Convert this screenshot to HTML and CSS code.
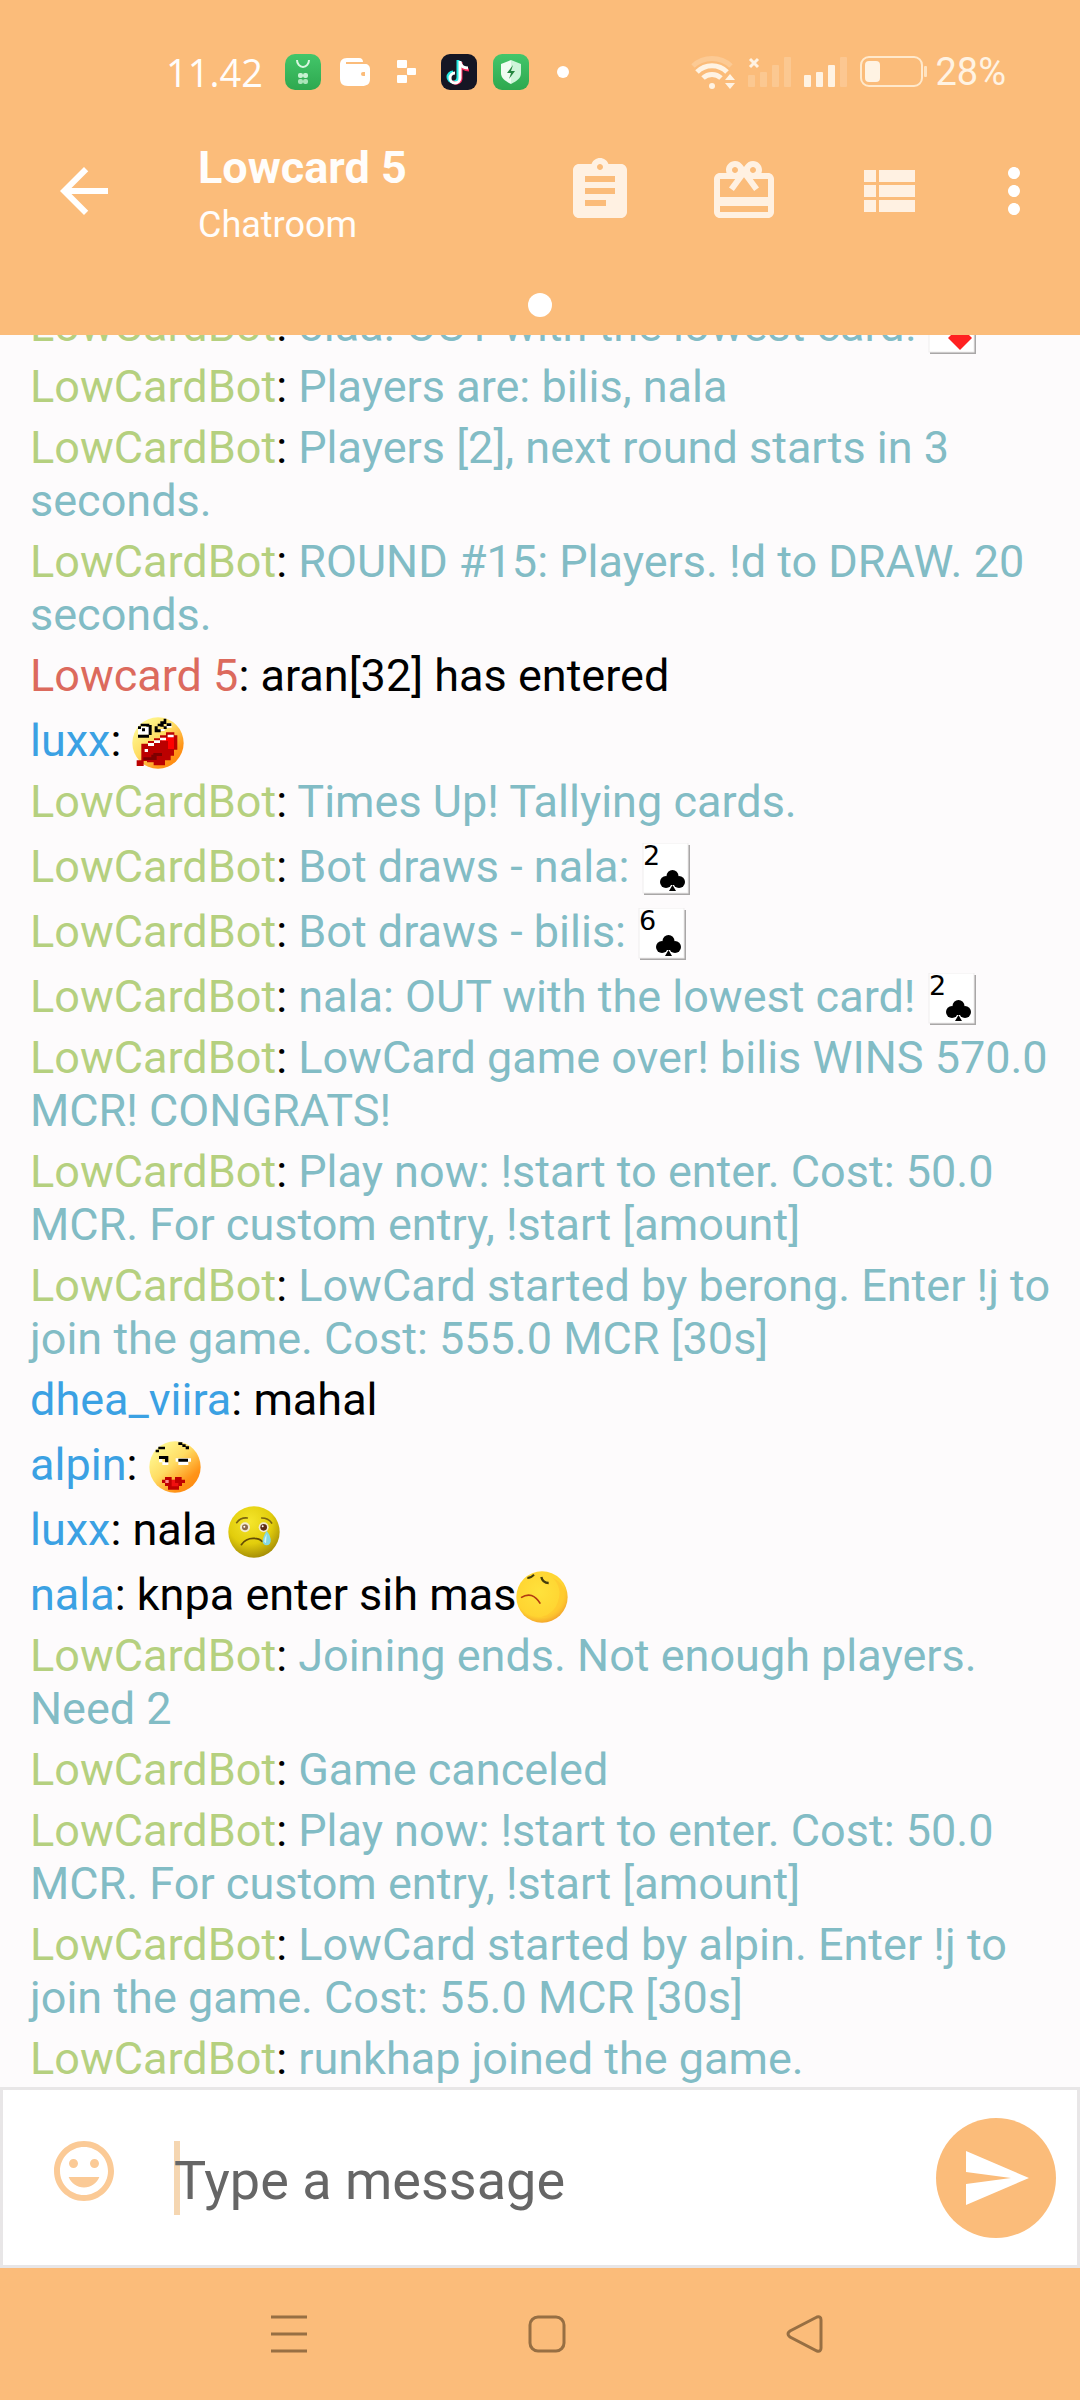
FILE: index.html
```html
<!DOCTYPE html>
<html lang="id">
<head>
<meta charset="utf-8">
<meta name="viewport" content="width=device-width, initial-scale=1">
<title>Lowcard 5</title>
<link rel="stylesheet" href="styles.css">
</head>
<body>
<svg class="defs" aria-hidden="true">
  <defs>
    <linearGradient id="face" x1="0.2" y1="0.1" x2="0.9" y2="0.9">
      <stop offset="0" stop-color="#fff78f"/><stop offset="0.4" stop-color="#ffdc63"/><stop offset="0.8" stop-color="#ff9418"/><stop offset="1" stop-color="#ff8a10"/>
    </linearGradient>
    <radialGradient id="sadface" cx="0.42" cy="0.3" r="0.72">
      <stop offset="0" stop-color="#f5e62c"/><stop offset="0.6" stop-color="#e2cd0c"/><stop offset="1" stop-color="#a48c06"/>
    </radialGradient>
    <radialGradient id="frownface" cx="0.45" cy="0.4" r="0.6">
      <stop offset="0" stop-color="#ffe23c"/><stop offset="0.8" stop-color="#ffd431"/><stop offset="1" stop-color="#f5a92c"/>
    </radialGradient>
    <linearGradient id="green" x1="0" y1="0" x2="0" y2="1">
      <stop offset="0" stop-color="#43c66a"/><stop offset="1" stop-color="#2ea84f"/>
    </linearGradient>
    <symbol id="card" viewBox="0 0 52 52">
      <rect x="3" y="2" width="46" height="50" fill="#a9a7a7"/>
      <rect x="2" y="0" width="45" height="50" fill="#fff" stroke="#efeded"/>
    </symbol>
    <symbol id="club" viewBox="0 0 25 22">
      <circle cx="12.500" cy="6" r="6"/><circle cx="6" cy="12" r="6"/><circle cx="19" cy="12" r="6"/>
      <path d="M9 7h7v8H9zM12.500 15l3.500 6H9z"/>
    </symbol>
  </defs>
</svg>

<div class="screen">
  <header class="top">
    <div class="status">
      <span class="clock">11.42</span>
      <div class="status-apps">
        <svg width="36" height="36" viewBox="0 0 36 36"><rect width="36" height="36" rx="10" fill="url(#green)"/><path d="M12 6a6 7 0 0 0 12 0" fill="none" stroke="#d9f7e1" stroke-width="2"/><g fill="#c8f2d2"><rect x="13" y="19" width="5" height="5" rx="2"/><rect x="18" y="19" width="5" height="5" rx="2"/><rect x="13" y="25" width="5" height="5" rx="2" opacity=".8"/><rect x="18" y="25" width="5" height="5" rx="2" opacity=".8"/></g></svg>
        <svg width="32" height="30" viewBox="0 0 32 30"><path fill="#fff" d="M8 1h12c3 0 4 2 4 4H7v2h19c3 0 5 2 5 5v10c0 5-3 7-8 7H9c-6 0-8-3-8-8V8c0-4 2-7 7-7z"/><path fill="#fbbc7a" d="M24 15h2v4h-2a2 2 0 0 1 0-4z"/></svg>
        <svg width="20" height="24" viewBox="0 0 20 24" fill="#fff"><rect width="10" height="8" rx="1"/><rect x="10" y="8" width="9" height="7" rx="1"/><rect y="15" width="10" height="8" rx="1"/></svg>
        <svg width="36" height="36" viewBox="0 0 36 36"><rect width="36" height="36" rx="9" fill="#151624"/><g fill="none" stroke-width="3"><path stroke="#25e8e2" d="M17 6v17a5 5 0 1 1-5-5M17 8c1 4 4 6 8 6"/><path stroke="#f8285b" d="M20 8v17a5 5 0 0 1-9 2M20 10c1 4 3 6 8 6"/><path stroke="#fff" d="M19 7v17a5 5 0 1 1-5-5M19 8c1 4 3 6 8 6"/></g></svg>
        <svg width="36" height="36" viewBox="0 0 36 36"><rect width="36" height="36" rx="9" fill="url(#green)"/><path fill="#cdf5da" d="M18 6l10 4v9c0 5-4 8-10 11z"/><path fill="#effcf2" d="M18 6L8 10v9c0 5 4 8 10 11z"/><path fill="#23853f" d="M20 11l-6 8h4l-2 6 6-8h-4z"/></svg>
        <svg width="12" height="12" viewBox="0 0 12 12"><circle cx="6" cy="6" r="6" fill="#fff"/></svg>
      </div>
      <div class="status-system">
        <svg width="45" height="36" viewBox="0 0 45 36"><g fill="none" stroke="#fff3e3" stroke-width="5"><path d="M2 12a28 28 0 0 1 38 0" opacity=".25"/><path d="M6 18a21 21 0 0 1 30 0"/><path d="M12 24a13 13 0 0 1 18 0"/></g><g fill="#fff3e3"><circle cx="21" cy="32" r="3"/><path d="M34 26l5-6 5 6zM34 29h10l-5 6z"/></g></svg>
        <svg width="44" height="32" viewBox="0 0 44 32" fill="#fff3e3"><g opacity=".22"><rect y="19" width="7" height="12" rx="1"/><rect x="12" y="16" width="7" height="15" rx="1"/><rect x="24" y="9" width="7" height="22" rx="1"/><rect x="36" y="1" width="7" height="30" rx="1"/></g><path d="M2 3l8 8M10 3l-8 8" stroke="#fff3e3" stroke-width="3"/></svg>
        <svg width="44" height="32" viewBox="0 0 44 32" fill="#fff3e3"><rect y="19" width="7" height="12" rx="1"/><rect x="12" y="16" width="7" height="15" rx="1"/><rect x="24" y="9" width="7" height="22" rx="1"/><rect x="36" y="1" width="7" height="30" rx="1" opacity=".22"/></svg>
        <svg width="68" height="32" viewBox="0 0 68 32"><rect x="1" y="1" width="61" height="29" rx="8" fill="none" stroke="#ffe9cc" stroke-width="2"/><rect x="5" y="5" width="15" height="21" rx="4" fill="#fff3e3"/><rect x="64" y="10" width="3" height="11" rx="1" fill="#ffe3c0"/></svg>
      </div>
      <span class="battery">28%</span>
    </div>

    <div class="toolbar">
      <button class="icon-button back" aria-label="Back"><svg viewBox="0 0 24 24"><path d="M20 11H7.830l5.590-5.590L12 4l-8 8 8 8 1.410-1.410L7.830 13H20v-2z"/></svg></button>
      <div class="titles">
        <h1 class="title">Lowcard 5</h1>
        <p class="subtitle">Chatroom</p>
      </div>
      <div class="actions">
        <button class="icon-button soft" aria-label="Notes"><svg viewBox="0 0 24 24"><path d="M19 3h-4.180C14.400 1.840 13.300 1 12 1c-1.300 0-2.400.84-2.820 2H5c-1.100 0-2 .9-2 2v14c0 1.100.9 2 2 2h14c1.100 0 2-.9 2-2V5c0-1.100-.9-2-2-2zm-7 0c.55 0 1 .45 1 1s-.45 1-1 1-1-.45-1-1 .45-1 1-1zm2 14H7v-2h7v2zm3-4H7v-2h10v2zm0-4H7V7h10v2z"/></svg></button>
        <button class="icon-button soft" aria-label="Gifts"><svg viewBox="0 0 24 24"><path d="M20 6h-2.180c.11-.31.18-.65.18-1 0-1.660-1.340-3-3-3-1.050 0-1.960.54-2.500 1.350l-.5.67-.5-.68C10.960 2.540 10.050 2 9 2 7.340 2 6 3.340 6 5c0 .35.07.69.18 1H4c-1.110 0-1.990.89-1.990 2L2 19c0 1.110.89 2 2 2h16c1.110 0 2-.89 2-2V8c0-1.110-.89-2-2-2zm-5-2c.55 0 1 .45 1 1s-.45 1-1 1-1-.45-1-1 .45-1 1-1zM9 4c.55 0 1 .45 1 1s-.45 1-1 1-1-.45-1-1 .45-1 1-1zm11 15H4v-2h16v2zm0-5H4V8h5.080L7 10.830 8.620 12 11 8.760l1-1.360 1 1.360L15.380 12 17 10.830 14.920 8H20v6z"/></svg></button>
        <button class="icon-button soft list" aria-label="List"><svg viewBox="0 0 24 24"><path d="M4 14h4v-4H4v4zm0 5h4v-4H4v4zM4 9h4V5H4v4zm5 5h12v-4H9v4zm0 5h12v-4H9v4zM9 5v4h12V5H9z"/></svg></button>
        <button class="icon-button" aria-label="More options"><svg viewBox="0 0 24 24"><path d="M12 8c1.100 0 2-.9 2-2s-.9-2-2-2-2 .9-2 2 .9 2 2 2zm0 2c-1.100 0-2 .9-2 2s.9 2 2 2 2-.9 2-2-.9-2-2-2zm0 6c-1.100 0-2 .9-2 2s.9 2 2 2 2-.9 2-2-.9-2-2-2z"/></svg></button>
      </div>
    </div>
    <div class="pager"><span class="dot"></span></div>
  </header>

  <main class="chat">
    <ol class="messages">
      <li class="message bot tall"><b>LowCardBot</b>: <span>olaa: OUT with the lowest card!</span> <svg class="emote" viewBox="0 0 52 52" role="img" aria-label="diamond card"><use href="#card"/><path d="M33 24l12 12-12 12-12-12z" fill="#ff2020"/></svg></li>
      <li class="message bot"><b>LowCardBot</b>: <span>Players are: bilis, nala</span></li>
      <li class="message bot"><b>LowCardBot</b>: <span>Players [2], next round starts in 3 seconds.</span></li>
      <li class="message bot"><b>LowCardBot</b>: <span>ROUND #15: Players. !d to DRAW. 20 seconds.</span></li>
      <li class="message room"><b>Lowcard 5</b>: <span>aran[32] has entered</span></li>
      <li class="message user tall"><b>luxx</b>: <svg class="emote" viewBox="0 0 156 156" role="img" aria-label="shouting"><circle cx="78" cy="78" r="77" fill="url(#face)"/>
        <path fill="#fff" d="M18 29h34v24H18zM80 36h18V26h9V18h12v14H98v10H80z"/>
        <path fill="#000" d="M26 20h26v9h-9v-1H26zM50 24h9v30h-8v8H18v-9h32zM18 28h9v8h-9zM30 34h9v9h-9zM68 28h9v-8h9v8h-9v9h9v9H68zM85 13h10v-8h8v16h-8v8H85zM95 28h9v-9h14v8h-14v9h-9z"/>
        <path fill="#b00" d="M28 80h20v-8h18v-8h18v-9h18V46h25v9h9v43h-10v18h-10v14h-17v15H65v-9H45v-4H35v15H14v-17h14z"/>
        <path fill="#7d0000" d="M64 108h26v9H74v12H34v-8h24v-8h6z"/><path fill="#f00" d="M108 61h18v35h-18zM90 62h18v10H90z"/><path fill="#fff" d="M48 78h18v9H48zM66 70h18v8H66zM84 62h18v8H84zM107 53h18v8h-18zM38 96h10v9H38z"/></svg></li>
      <li class="message bot"><b>LowCardBot</b>: <span>Times Up! Tallying cards.</span></li>
      <li class="message bot tall"><b>LowCardBot</b>: <span>Bot draws - nala:</span> <svg class="emote" viewBox="0 0 52 52" role="img" aria-label="2 of clubs"><use href="#card"/><text x="2" y="22" class="rank">2</text><use href="#club" x="19" y="27" width="25" height="22"/></svg></li>
      <li class="message bot tall"><b>LowCardBot</b>: <span>Bot draws - bilis:</span> <svg class="emote" viewBox="0 0 52 52" role="img" aria-label="6 of clubs"><use href="#card"/><text x="2" y="22" class="rank">6</text><use href="#club" x="19" y="27" width="25" height="22"/></svg></li>
      <li class="message bot tall"><b>LowCardBot</b>: <span>nala: OUT with the lowest card!</span> <svg class="emote" viewBox="0 0 52 52" role="img" aria-label="2 of clubs"><use href="#card"/><text x="2" y="22" class="rank">2</text><use href="#club" x="19" y="27" width="25" height="22"/></svg></li>
      <li class="message bot"><b>LowCardBot</b>: <span>LowCard game over! bilis WINS 570.0 MCR! CONGRATS!</span></li>
      <li class="message bot"><b>LowCardBot</b>: <span>Play now: !start to enter. Cost: 50.0 MCR. For custom entry, !start [amount]</span></li>
      <li class="message bot"><b>LowCardBot</b>: <span>LowCard started by berong. Enter !j to join the game. Cost: 555.0 MCR [30s]</span></li>
      <li class="message user"><b>dhea_viira</b>: <span>mahal</span></li>
      <li class="message user tall"><b>alpin</b>: <svg class="emote" viewBox="0 0 156 156" role="img" aria-label="kiss"><circle cx="78" cy="78" r="77" fill="url(#face)"/>
        <path fill="#fff" d="M30 54h10v8h18v10H40v-8H30zM80 52h46v10h-8v10H88V62h-8z"/>
        <path fill="#000" d="M20 26h10v8H20zM28 17h20v8H28zM88 4h12v8H88zM100 10h10v8h-10zM110 16h10v9h-10zM30 45h28v19H48V54H30zM88 53h29v9H88z"/>
        <path fill="#c00000" d="M48 108h20v8h10v-8h20v8h10v10h-9v9h-9v11H57v-11h-9v-9h-9v-10h9z"/><path fill="#f01010" d="M68 117h10v9h10v10H68z"/><path fill="#ff8c8c" d="M49 117h10v9H49z"/></svg></li>
      <li class="message user tall"><b>luxx</b>: <span>nala</span> <svg class="emote" viewBox="0 0 156 156" role="img" aria-label="crying"><circle cx="78" cy="78" r="77" fill="url(#sadface)"/>
        <g fill="none" stroke="#7b6410" stroke-linecap="round" stroke-width="5"><path d="M26 50q12-16 32-14M101 36q20 0 30 15"/><path d="M40 116q14-20 38-19 16 0 24 9" stroke="#624b06"/></g>
        <circle cx="51" cy="64" r="15" fill="#f2ead0"/><circle cx="51" cy="64" r="9" fill="#8a6847"/><circle cx="107" cy="64" r="15" fill="#f2ead0"/><circle cx="107" cy="64" r="10" fill="#5c2c14"/><circle cx="49" cy="62" r="3" fill="#fff"/><circle cx="104" cy="61" r="3" fill="#fff"/>
        <path d="M116 74q14 18 12 32-2 12-12 12-12-1-12-13 1-13 12-31z" fill="#86d8e2"/><path d="M116 84q-7 12-7 22 2 6 5 5z" fill="#d5f6f7"/></svg></li>
      <li class="message user tall"><b>nala</b>: <span>knpa enter sih mas</span><svg class="emote" viewBox="0 0 156 156" role="img" aria-label="frown"><circle cx="78" cy="78" r="77" fill="url(#frownface)"/>
        <path d="M110 20q30 30 16 72-10 34-50 46 60 4 74-50 4-46-40-68z" fill="#ffbe2c" opacity=".45"/>
        <path d="M34 21q12 0 20-10" fill="none" stroke="#443c0c" stroke-width="6"/><path d="M76 18q4 18 22 18" fill="none" stroke="#443c0c" stroke-width="7"/><path d="M15 80q34-22 58 18" fill="none" stroke="#b23a10" stroke-width="5"/></svg></li>
      <li class="message bot"><b>LowCardBot</b>: <span>Joining ends. Not enough players. Need 2</span></li>
      <li class="message bot"><b>LowCardBot</b>: <span>Game canceled</span></li>
      <li class="message bot"><b>LowCardBot</b>: <span>Play now: !start to enter. Cost: 50.0 MCR. For custom entry, !start [amount]</span></li>
      <li class="message bot"><b>LowCardBot</b>: <span>LowCard started by alpin. Enter !j to join the game. Cost: 55.0 MCR [30s]</span></li>
      <li class="message bot"><b>LowCardBot</b>: <span>runkhap joined the game.</span></li>
    </ol>
  </main>

  <form class="composer">
    <button type="button" class="icon-button smile" aria-label="Insert emoticon"><svg viewBox="0 0 24 24"><path d="M11.990 2C6.470 2 2 6.480 2 12s4.470 10 9.990 10C17.520 22 22 17.520 22 12S17.520 2 11.990 2zM12 20c-4.420 0-8-3.580-8-8s3.580-8 8-8 8 3.580 8 8-3.580 8-8 8zm3.500-9c.83 0 1.500-.67 1.500-1.500S16.330 8 15.500 8 14 8.670 14 9.500s.67 1.500 1.500 1.500zm-7 0c.83 0 1.500-.67 1.500-1.500S9.330 8 8.500 8 7 8.670 7 9.500 7.670 11 8.500 11zm3.500 6.500c2.330 0 4.310-1.460 5.110-3.500H6.890c.8 2.040 2.780 3.500 5.110 3.500z"/></svg></button>
    <input class="field" type="text" placeholder="Type a message" aria-label="Type a message">
    <button type="submit" class="send" aria-label="Send"><svg viewBox="0 0 24 24"><path d="M2.010 21L23 12 2.010 3 2 10l15 2-15 2z"/></svg></button>
  </form>

  <nav class="navbar" aria-label="System">
    <button class="nav-button" aria-label="Recents"><svg viewBox="0 0 38 38"><path d="M1 2h36M1 19h36M1 36h36"/></svg></button>
    <button class="nav-button" aria-label="Home"><svg viewBox="0 0 38 38"><rect x="2" y="2" width="34" height="34" rx="8"/></svg></button>
    <button class="nav-button" aria-label="Back"><svg viewBox="0 0 38 38"><path d="M31 2L4 16q-4 3 0 6l27 14q4 1 4-3V5q0-4-4-3z"/></svg></button>
  </nav>
</div>
</body>
</html>
```
FILE: styles.css
```css
* {
  box-sizing: border-box;
}

body {
  margin: 0;
  font-family: Roboto, "Liberation Sans", sans-serif;
  color: #000;
  background: #fdfbfc;
}

button {
  padding: 0;
  border: 0;
  background: none;
}

svg {
  display: block;
  flex: none;
}

.defs {
  position: absolute;
  width: 0;
  height: 0;
}

.screen {
  display: flex;
  flex-direction: column;
  height: 100vh;
}

/* Header */
.top {
  flex: none;
  color: #fffdfb;
  background: #fbbc7a;
}

.status {
  display: flex;
  align-items: center;
  height: 130px;
  padding: 14px 74px 0 166px;
}

.clock {
  flex: 1;
  font: 38px/44px "Open Sans", "Noto Sans", sans-serif;
}

.status-apps {
  display: grid;
  grid-template-columns: repeat(6, 52px);
  place-items: center;
  margin-right: 102px;
}

.status-system {
  display: flex;
  align-items: center;
  gap: 12px;
  margin-right: 7px;
}

.battery {
  font-size: 38px;
  line-height: 44px;
  color: #fff3e3;
}

.toolbar {
  display: flex;
  align-items: center;
  height: 122px;
  padding: 0 30px 0 48px;
}

.icon-button {
  flex: none;
  width: 72px;
  height: 72px;
  color: #fff;
}

.icon-button svg {
  width: 72px;
  height: 72px;
  fill: currentColor;
}

.soft {
  color: #fff1e2;
}

.titles {
  flex: 1;
  padding: 8px 0 0 78px;
}

.title,
.subtitle {
  margin: 0;
  font-weight: 400;
}

.title {
  font-size: 45px;
  line-height: 60px;
  font-weight: 700;
}

.subtitle {
  font-size: 36px;
  line-height: 54px;
}

.actions {
  display: flex;
  gap: 72px;
}

.list {
  margin-right: -18px;
}

.pager {
  display: flex;
  justify-content: center;
  padding: 41px 0 18px;
}

.dot {
  width: 24px;
  height: 24px;
  border-radius: 50%;
  background: #fff;
}

/* Conversation */
.chat {
  display: flex;
  flex-direction: column;
  justify-content: flex-end;
  flex: 1;
  min-height: 0;
  overflow: hidden;
}

.messages {
  display: flex;
  flex-direction: column;
  gap: 8px;
  margin: 0;
  padding: 0 24px 2px 30px;
  list-style: none;
}

.message {
  font-size: 45px;
  line-height: 53px;
}

.message b {
  font-weight: 400;
}

.tall {
  padding-top: 4px;
}

.bot b {
  color: #b5d07f;
}

.bot span {
  color: #82bcc5;
}

.room b {
  color: #dc6a5d;
}

.user b {
  color: #3ba1e3;
}

.emote {
  display: inline-block;
  width: 52px;
  height: 52px;
  margin: -2px 0;
  vertical-align: -11px;
}

.rank {
  font: 27px "DejaVu Sans", sans-serif;
}

/* Composer */
.composer {
  display: flex;
  align-items: center;
  flex: none;
  height: 181px;
  padding: 0 21px 0 45px;
  border: 3px solid #e8e6e7;
  background: #fff;
}

.smile {
  margin-bottom: 14px;
  color: #fbca96;
}

.field {
  flex: 1;
  min-width: 0;
  height: 74px;
  margin: 0 0 0 54px;
  padding: 6px 0 0;
  border: 0;
  outline: 0;
  font: 54px/64px Roboto, "Liberation Sans", sans-serif;
  color: #000;
  background: linear-gradient(#f5d6b1, #f5d6b1) left / 6px 100% no-repeat;
}

.field::placeholder {
  color: #666;
  opacity: 1;
}

.send {
  display: grid;
  place-items: center;
  width: 120px;
  height: 120px;
  border-radius: 50%;
  background: #fbbc7a;
}

.send svg {
  width: 72px;
  height: 72px;
  fill: #fff;
}

/* System navigation */
.navbar {
  display: flex;
  justify-content: center;
  gap: 220px;
  flex: none;
  height: 132px;
  padding: 0 0 0 14px;
  background: #fbbc7a;
}

.nav-button svg {
  width: 38px;
  height: 38px;
  fill: none;
  stroke: #976f43;
  stroke-width: 3px;
}
```
